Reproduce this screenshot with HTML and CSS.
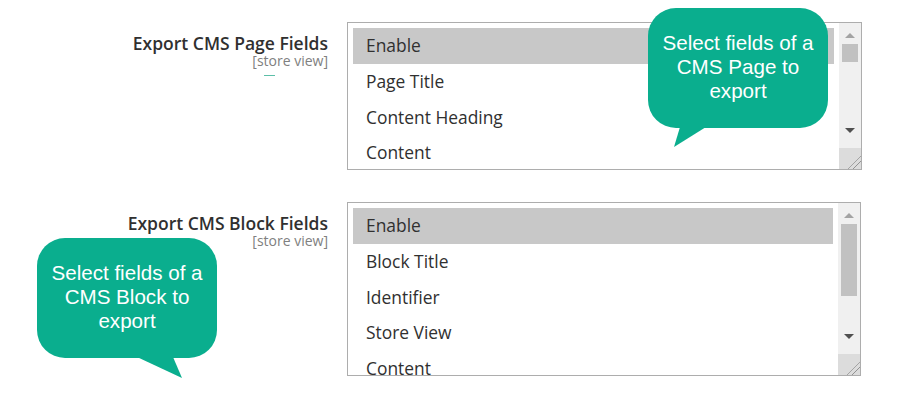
FILE: index.html
```html
<!DOCTYPE html>
<html lang="en">
<head>
    <meta charset="UTF-8">
    <title>Export CMS Fields</title>
    <link rel="stylesheet" href="styles.css">
</head>
<body>
    <div class="form">
        <div class="field">
            <div class="label">
                <span class="title">Export CMS Page Fields</span>
                <span class="scope">[store view]</span>
                <span class="dash"></span>
            </div>
            <div class="listbox page">
                <ul class="options">
                    <li class="selected">Enable</li>
                    <li>Page Title</li>
                    <li>Content Heading</li>
                    <li>Content</li>
                </ul>
                <div class="scrollbar">
                    <span class="arrow up"></span>
                    <span class="thumb"></span>
                    <span class="arrow down"></span>
                    <span class="grip"></span>
                </div>
            </div>
        </div>

        <div class="field">
            <div class="label">
                <span class="title">Export CMS Block Fields</span>
                <span class="scope">[store view]</span>
            </div>
            <div class="listbox block">
                <ul class="options">
                    <li class="selected">Enable</li>
                    <li>Block Title</li>
                    <li>Identifier</li>
                    <li>Store View</li>
                    <li>Content</li>
                </ul>
                <div class="scrollbar">
                    <span class="arrow up"></span>
                    <span class="thumb"></span>
                    <span class="arrow down"></span>
                    <span class="grip"></span>
                </div>
            </div>
        </div>
    </div>

    <div class="callout callout-page">
        <p>Select fields of a CMS Page to export</p>
        <svg class="tail" width="40" height="22" viewBox="0 0 40 22"><polygon points="6,0 32,0 0,20" /></svg>
    </div>
    <div class="callout callout-block">
        <p>Select fields of a CMS Block to export</p>
        <svg class="tail" width="50" height="24" viewBox="0 0 50 24"><polygon points="0,0 36,0 45,21" /></svg>
    </div>
</body>
</html>
```

FILE: styles.css
```css
body {
    margin: 0;
    background: #ffffff;
    font-family: 'Open Sans', sans-serif;
    color: #303030;
    width: 900px;
    height: 396px;
    overflow: hidden;
    position: relative;
}
.form {
    padding-top: 22px;
    display: flex;
    flex-direction: column;
    gap: 32px;
}
.field {
    display: flex;
    align-items: flex-start;
}
.label {
    width: 328px;
    display: flex;
    flex-direction: column;
    align-items: flex-end;
    padding-top: 11px;
    margin-right: 19px;
}
.title {
    font-size: 17.5px;
    font-weight: 600;
    line-height: 20px;
    color: #303030;
}
.scope {
    font-size: 14px;
    line-height: 16px;
    color: #808080;
}
.dash {
    width: 11px;
    height: 1px;
    background: #5cbfa8;
    margin: 6px 53px 0 0;
}
.listbox {
    border: 1px solid #adadad;
    display: flex;
    background: #ffffff;
}
.listbox.page {
    width: 513px;
    height: 146px;
}
.listbox.block {
    width: 512px;
    height: 172px;
}
.options {
    list-style: none;
    margin: 0;
    padding: 5px 5px 0 5px;
    flex: 1;
    overflow: hidden;
}
.options li {
    height: 35.5px;
    line-height: 35px;
    padding-left: 13px;
    font-size: 17.4px;
    color: #303030;
}
.options li.selected {
    background: #c8c8c8;
    height: 36px;
}
.scrollbar {
    width: 22px;
    background: #f0f0f0;
    display: flex;
    flex-direction: column;
    align-items: center;
    position: relative;
}
.arrow {
    width: 0;
    height: 0;
    border-left: 5px solid transparent;
    border-right: 5px solid transparent;
}
.arrow.up {
    border-bottom: 5px solid #a3a3a3;
    margin-top: 10px;
}
.thumb {
    width: 16px;
    background: #c1c1c1;
    margin-top: 6px;
}
.page .thumb { height: 18px; }
.block .thumb { height: 72px; }
.arrow.down {
    border-top: 5px solid #505050;
    margin-top: auto;
    margin-bottom: 15px;
}
.grip {
    width: 22px;
    height: 21px;
    background: #dcdcdc linear-gradient(135deg, transparent 68%, #808080 69%, transparent 71%, transparent 80%, #808080 81%, transparent 83%);
}
.callout {
    position: absolute;
    width: 180px;
    height: 120px;
    border-radius: 28px;
    background: #0aae8e;
    color: #ffffff;
    font-family: 'Liberation Sans', Arial, sans-serif;
    font-size: 20.6px;
    line-height: 24px;
    text-align: center;
    box-sizing: border-box;
    padding: 23px 8px 0;
}
.callout p {
    margin: 0;
}
.callout .tail {
    position: absolute;
    fill: #0aae8e;
}
.callout-page {
    left: 648px;
    top: 8px;
}
.callout-page .tail {
    left: 26px;
    top: 119px;
}
.callout-block {
    left: 37px;
    top: 238px;
}
.callout-block .tail {
    left: 100px;
    top: 119px;
}
```
